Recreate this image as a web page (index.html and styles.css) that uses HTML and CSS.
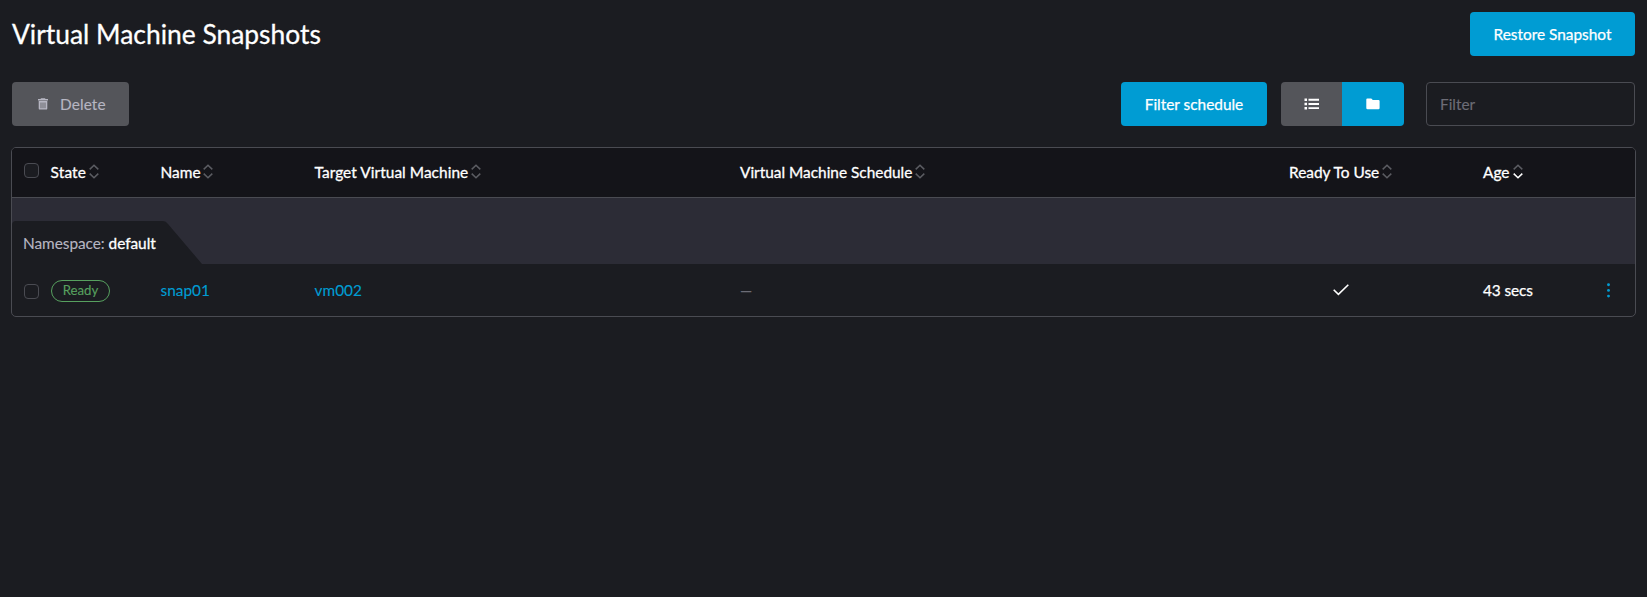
FILE: index.html
```html
<!DOCTYPE html>
<html lang="en">
<head>
<meta charset="utf-8">
<title>Virtual Machine Snapshots</title>
<link rel="stylesheet" href="styles.css">
</head>
<body>
<svg class="defs" width="0" height="0">
  <symbol id="sort" viewBox="0 0 10 15"><path class="up" d="M.7 5.4 5 1.2l4.3 4.2"/><path class="down" d="M.7 9.6 5 13.8l4.3-4.2"/></symbol>
</svg>
<main class="page">
  <header class="title-row">
    <h1>Virtual Machine Snapshots</h1>
    <button class="btn restore">Restore Snapshot</button>
  </header>
  <div class="toolbar">
    <button class="btn delete">
      <svg width="10" height="12" viewBox="0 0 10 12"><path fill="currentColor" fill-rule="evenodd" d="M3 .3h4l.5.8H10v1.5H0V1.1h2.5zM.7 3h8.6v7.4q0 1.2-1.2 1.2H1.9Q.7 11.6.7 10.4zM2.6 4.4v5.8h.8V4.4zm2 0v5.8h.8V4.4zm2 0v5.8h.8V4.4z"/></svg>
      <span>Delete</span>
    </button>
    <button class="btn schedule">Filter schedule</button>
    <div class="toggle">
      <button class="seg"><svg width="15" height="12" viewBox="0 0 15 12"><path fill="#fff" d="M.5.5H3V3H.5zM.5 4.8H3v2.4H.5zM.5 9H3v2.4H.5zM4.5.8H15v1.9H4.5zM4.5 5H15v1.9H4.5zM4.5 9.2H15v1.9H4.5z"/></svg></button>
      <button class="seg active"><svg width="14" height="12" viewBox="0 0 14 12"><path fill="#fff" d="M1.3.5h4l1.5 1.4h5.7q1.1 0 1.1 1.1v7q0 1.2-1.2 1.2H1.5Q.3 11.2.3 10V1.6Q.3.5 1.3.5z"/></svg></button>
    </div>
    <input class="filter" type="text" placeholder="Filter">
  </div>
  <section class="table">
    <div class="row head">
      <span class="check"></span>
      <span class="th state">State<svg class="sort"><use href="#sort"/></svg></span>
      <span class="th">Name<svg class="sort"><use href="#sort"/></svg></span>
      <span class="th target">Target Virtual Machine<svg class="sort"><use href="#sort"/></svg></span>
      <span class="th">Virtual Machine Schedule<svg class="sort"><use href="#sort"/></svg></span>
      <span class="th">Ready To Use<svg class="sort"><use href="#sort"/></svg></span>
      <span class="th">Age<svg class="sort desc"><use href="#sort"/></svg></span>
    </div>
    <div class="group">
      <div class="tab"><span>Namespace:</span> <b>default</b></div>
    </div>
    <div class="row item">
      <span class="check"></span>
      <span><span class="badge">Ready</span></span>
      <a class="link">snap01</a>
      <a class="link">vm002</a>
      <span class="muted">—</span>
      <span class="ready"><svg width="16" height="12" viewBox="0 0 16 12"><path fill="none" stroke="#fff" stroke-width="1.6" d="m.7 5.8 4.7 4.6L15.3.8"/></svg></span>
      <span class="age">43 secs</span>
      <span class="kebab"><svg width="3" height="15" viewBox="0 0 3 15"><circle cx="1.5" cy="1.7" r="1.45"/><circle cx="1.5" cy="7.4" r="1.45"/><circle cx="1.5" cy="13.1" r="1.45"/></svg></span>
    </div>
  </section>
</main>
</body>
</html>
```
FILE: styles.css
```css
* { box-sizing: border-box; }
body {
  margin: 0;
  min-height: 100vh;
  background: #1b1c21;
  color: #fff;
  font: 15.4px/20px Lato, sans-serif;
  -webkit-text-stroke: .12px;
}
.defs { display: block; height: 0; }
.page { padding: 12px 12px 0; }
.title-row { display: flex; justify-content: space-between; height: 44px; }
h1 { margin: 0; font-size: 26.4px; line-height: 45px; font-weight: 400; -webkit-text-stroke: .3px; }
button, input { font: inherit; }
.btn {
  height: 44px;
  padding: 0;
  border: 0;
  border-radius: 4px;
  background: #009cd3;
  color: #fff;
  -webkit-text-stroke: .25px;
}
.restore { width: 165px; }
.toolbar { display: flex; margin-top: 26px; }
.delete {
  display: flex;
  align-items: center;
  width: 117px;
  margin-right: auto;
  padding-left: 26px;
  background: #54555a;
  color: #b6b6c2;
  -webkit-text-stroke: .12px;
}
.delete span { margin-left: 12px; letter-spacing: .1px; }
.schedule { width: 146px; }
.toggle { display: flex; margin: 0 22px 0 14px; border-radius: 4px; overflow: hidden; }
.seg {
  display: flex;
  align-items: center;
  justify-content: center;
  width: 61px;
  padding: 0;
  border: 0;
  background: #54555a;
}
.seg.active { width: 62px; background: #009cd3; }
.filter {
  width: 209px;
  height: 44px;
  padding: 0 13px;
  border: 1px solid #4a4b52;
  border-radius: 4px;
  background: transparent;
  color: #fff;
}
.filter::placeholder { color: #6c6c76; opacity: 1; }
.table {
  margin: 21px -1px 0;
  border: 1px solid #4a4b52;
  border-radius: 5px;
  overflow: hidden;
}
.row {
  display: grid;
  grid-template-columns: 26.6px 110px 154px 425.4px 549px 194px 110px 32px;
  align-items: center;
  padding-left: 12px;
}
.head { height: 50px; padding-bottom: 2px; border-bottom: 1px solid #4a4b52; background: #141419; -webkit-text-stroke: .3px; }
.check { width: 15px; height: 15px; border: 1px solid #4a4b52; border-radius: 4px; background: #1b1c21; }
.head .check { margin-bottom: 3px; }
.th { display: flex; align-items: center; }
.state { letter-spacing: .15px; }
.target { letter-spacing: .06px; }
.sort { width: 10px; height: 15px; margin: 0 0 0 2.8px; fill: none; stroke: #5b5c62; stroke-width: 1.5; }
.desc { --down: #fff; margin-left: 3.4px; }
.down { stroke: var(--down, #5b5c62); }
.group { height: 66px; padding-top: 23px; background: #2c2c36; }
.tab {
  width: 190px;
  height: 43px;
  padding-left: 11px;
  border-top-left-radius: 4px;
  background: #1b1c21;
  color: #b6b6c2;
  line-height: 45px;
  letter-spacing: -.04px;
  clip-path: path("M0 0H151Q154 0 156 3L190 43H0Z");
}
.tab b { color: #fff; font-weight: 400; -webkit-text-stroke: .3px; }
.item { height: 52px; }
.item .check { margin-top: 2px; }
.badge {
  display: block;
  width: 59px;
  height: 22px;
  margin-top: 1px;
  margin-left: .4px;
  border: 1px solid #57a05f;
  border-radius: 11px;
  color: #57a05f;
  font-size: 13.2px;
  line-height: 19px;
  text-align: center;
}
.link { color: #009cd3; }
.muted { color: #6c6c76; }
.ready { display: flex; padding-left: 44px; }
.age { letter-spacing: -.1px; -webkit-text-stroke: .25px; }
.kebab { display: flex; justify-content: center; fill: #009cd3; }
```
